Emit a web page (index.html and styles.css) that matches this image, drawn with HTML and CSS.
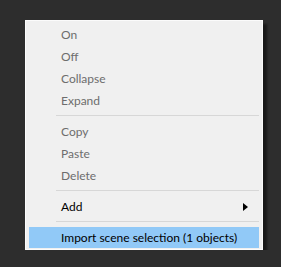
FILE: index.html
```html
<!DOCTYPE html>
<html lang="en">
<head>
    <meta charset="UTF-8">
    <title>Context Menu</title>
    <link rel="stylesheet" href="styles.css">
</head>
<body>
    <ul class="menu">
        <li class="item disabled">On</li>
        <li class="item disabled">Off</li>
        <li class="item disabled">Collapse</li>
        <li class="item disabled">Expand</li>
        <li class="separator"></li>
        <li class="item disabled">Copy</li>
        <li class="item disabled">Paste</li>
        <li class="item disabled">Delete</li>
        <li class="separator"></li>
        <li class="item submenu">Add</li>
        <li class="separator"></li>
        <li class="item active">Import scene selection (1 objects)</li>
    </ul>
</body>
</html>
```

FILE: styles.css
```css
:root {
    --page-bg: #2d2d2d;
    --menu-bg: #f0f0f0;
    --text: #000;
    --text-disabled: #6d6d6d;
    --highlight: #91c9f7;
    --rule: #d7d7d7;
}

* {
    margin: 0;
    padding: 0;
    box-sizing: border-box;
}

body {
    background-color: var(--page-bg);
    font-family: 'Lato', 'Noto Sans', sans-serif;
    font-size: 12px;
    padding: 20px 0 0 25px;
}

.menu {
    list-style: none;
    width: 238px;
    background-color: var(--menu-bg);
    border: 1px solid #fbfbfb;
    padding: 3px 3px 1px 3px;
    box-shadow: 4px 4px 2px rgba(0, 0, 0, 0.45);
}

.item {
    position: relative;
    height: 22px;
    line-height: 22px;
    padding-left: 32px;
    color: var(--text);
}

.item.disabled {
    color: var(--text-disabled);
}

.item.active {
    background-color: var(--highlight);
    height: 21px;
    line-height: 21px;
}

/* little black arrow for a submenu */
.item.submenu::after {
    content: '';
    position: absolute;
    right: 11px;
    top: 7px;
    border-left: 5px solid #000;
    border-top: 4px solid transparent;
    border-bottom: 4px solid transparent;
}

.separator {
    height: 9px;
    margin-left: 27px;
    padding-top: 3px;
}

.separator::before {
    content: '';
    display: block;
    height: 1px;
    background-color: var(--rule);
}
```
